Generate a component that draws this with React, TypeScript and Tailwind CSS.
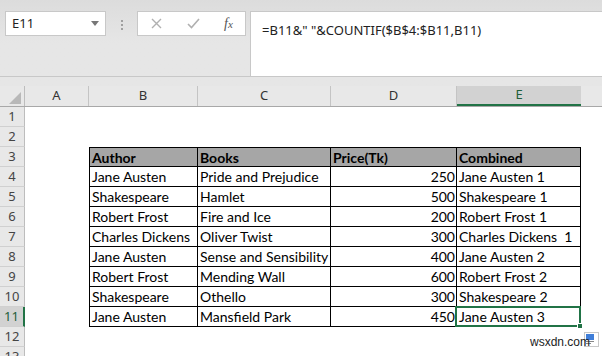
import React from "react"

const cols = [
  { key: "A", w: "w-[64px]" },
  { key: "B", w: "w-[109px]" },
  { key: "C", w: "w-[133px]" },
  { key: "D", w: "w-[126px]" },
  { key: "E", w: "w-[124px]" },
]

const data = [
  ["Jane Austen", "Pride and Prejudice", "250", "Jane Austen 1"],
  ["Shakespeare", "Hamlet", "500", "Shakespeare 1"],
  ["Robert Frost", "Fire and Ice", "200", "Robert Frost 1"],
  ["Charles Dickens", "Oliver Twist", "300", "Charles Dickens  1"],
  ["Jane Austen", "Sense and Sensibility", "400", "Jane Austen 2"],
  ["Robert Frost", "Mending Wall", "600", "Robert Frost 2"],
  ["Shakespeare", "Othello", "300", "Shakespeare 2"],
  ["Jane Austen", "Mansfield Park", "450", "Jane Austen 3"],
]

const cellFont = { fontFamily: "Lato, 'Liberation Sans', sans-serif" }

function RowHead({ n, active }: { n: number; active?: boolean }) {
  return (
    <div
      className={
        "w-[25px] shrink-0 h-full flex items-center justify-center text-[13px] border-b border-[#d0d0d0] " +
        (active
          ? "bg-[#d2d2d2] text-[#1e5e3a] border-r-2 border-r-[#217346]"
          : "bg-[#e8e8e8] text-[#444] border-r border-r-[#bdbdbd]")
      }
      style={{ fontFamily: "'Noto Sans', sans-serif" }}
    >
      {n}
    </div>
  )
}

function EmptyRow({ n }: { n: number }) {
  return (
    <div className="flex h-[20px]">
      <RowHead n={n} />
      <div className="flex-1 bg-white" />
    </div>
  )
}

export default function App() {
  return (
    <div className="w-[602px] h-[356px] overflow-hidden bg-white relative select-none">
      {/* formula area */}
      <div className="h-[86px] bg-gradient-to-b from-[#dcdcdc] via-[#e6e6e6] to-[#e6e6e6]">
        <div className="flex pt-[11px] h-[77px] border-b border-[#c8c8c8]">
          <div className="ml-[5px] w-[101px] h-[25px] bg-white border border-[#c8c8c8] flex items-center pl-[6px] pr-[6px]">
            <span className="text-[13px] text-[#222] flex-1" style={{ fontFamily: "'Noto Sans', sans-serif" }}>E11</span>
            <svg width="8" height="5" viewBox="0 0 8 5"><path d="M0 0h8L4 5z" fill="#777" /></svg>
          </div>
          <div className="w-[31px] flex flex-col items-center pt-[9px] gap-[2px]">
            <div className="w-[2px] h-[2px] bg-[#a0a0a0]" />
            <div className="w-[2px] h-[2px] bg-[#a0a0a0]" />
            <div className="w-[2px] h-[2px] bg-[#a0a0a0]" />
          </div>
          <div className="w-[109px] h-[25px] bg-white border border-[#c8c8c8] flex items-center">
            <svg className="ml-[13px]" width="11" height="11" viewBox="0 0 11 11">
              <path d="M1 1L10 10M10 1L1 10" stroke="#b0b0b0" strokeWidth="1.4" />
            </svg>
            <svg className="ml-[25px]" width="13" height="11" viewBox="0 0 13 11">
              <path d="M1 6L4.5 9.5L12 1" stroke="#b0b0b0" strokeWidth="1.6" fill="none" />
            </svg>
            <span
              className="ml-[24px] text-[14px] italic text-[#555] leading-none"
              style={{ fontFamily: "'Liberation Serif', serif" }}
            >
              f<span className="text-[11px]">x</span>
            </span>
          </div>
          <div className="ml-[4px] flex-1 h-[65px] bg-white border-l border-t border-[#c8c8c8] pl-[11px] pt-[5px]">
            <span className="text-[13px] text-[#222] whitespace-pre" style={{ fontFamily: "'Noto Sans', sans-serif" }}>
              =B11&amp;" "&amp;COUNTIF($B$4:$B11,B11)
            </span>
          </div>
        </div>
      </div>

      {/* column headers */}
      <div className="flex h-[21px] bg-[#e8e8e8] border-b border-[#a8a8a8]">
        <div className="w-[25px] shrink-0 border-r border-[#bdbdbd] flex items-end justify-end pr-[3px] pb-[2px]">
          <svg width="12" height="12" viewBox="0 0 12 12"><path d="M12 0V12H0z" fill="#b8b8b8" /></svg>
        </div>
        {cols.map((c) =>
          c.key === "E" ? (
            <div
              key={c.key}
              className={c.w + " shrink-0 bg-[#d2d2d2] border-b-2 border-[#217346] flex items-center justify-center text-[13px] text-[#1e5e3a]"}
              style={{ fontFamily: "'Noto Sans', sans-serif" }}
            >
              {c.key}
            </div>
          ) : (
            <div
              key={c.key}
              className={c.w + " shrink-0 border-r border-[#c4c4c4] flex items-center justify-center text-[13px] text-[#333]"}
              style={{ fontFamily: "'Noto Sans', sans-serif" }}
            >
              {c.key}
            </div>
          )
        )}
        <div className="flex-1" />
      </div>

      {/* rows */}
      <EmptyRow n={1} />
      <EmptyRow n={2} />

      <div className="flex h-[20px]">
        <RowHead n={3} />
        <div className="w-[64px] shrink-0" />
        {["Author", "Books", "Price(Tk)", "Combined"].map((h, i) => (
          <div
            key={h}
            className={
              cols[i + 1].w +
              " shrink-0 bg-[#a6a6a6] border-t border-r border-b border-black pl-[2px] flex items-center text-[14px] font-bold text-black " +
              (i === 0 ? "border-l" : "")
            }
            style={cellFont}
          >
            {h}
          </div>
        ))}
        <div className="flex-1" />
      </div>

      {data.map((r, ri) => {
        const n = ri + 4
        const last = n === 11
        return (
          <div key={n} className="flex h-[20px]">
            <RowHead n={n} active={last} />
            <div className="w-[64px] shrink-0" />
            {r.map((v, i) => (
              <div
                key={i}
                className={
                  cols[i + 1].w +
                  " shrink-0 relative border-r border-b border-black flex items-center whitespace-pre text-[14px] text-black " +
                  (i === 0 ? "border-l " : "") +
                  (i === 2 ? "justify-end pr-[1px] " : "pl-[2px] ") +
                  (i === 1 ? "overflow-visible z-10" : "")
                }
                style={cellFont}
              >
                {v}
                {last && i === 3 && (
                  <div className="absolute -left-[2px] -top-[1px] -right-[1px] -bottom-[1px] border-2 border-[#217346]">
                    <div className="absolute -right-[4px] -bottom-[4px] w-[6px] h-[6px] bg-[#217346] border border-white" />
                  </div>
                )}
              </div>
            ))}
            <div className="flex-1" />
          </div>
        )
      })}

      <EmptyRow n={12} />
      <EmptyRow n={13} />

      {/* paste options icon */}
      <div className="absolute left-[584px] top-[332px] w-[15px] h-[15px] bg-white border border-[#c8c8c8]">
        <div className="absolute left-[1px] top-[1px] w-[8px] h-[6px] bg-[#3f7ed8]" />
        <div className="absolute left-[1px] top-[8px] w-[8px] h-[1px] bg-[#888]" />
        <div className="absolute left-[1px] top-[10px] w-[5px] h-[1px] bg-[#888]" />
      </div>

      {/* watermark */}
      <div
        className="absolute left-[530px] top-[335px] text-[12px] leading-[14px] text-[#222]"
        style={{ fontFamily: "'Liberation Sans', sans-serif" }}
      >
        wsxdn.com
      </div>
    </div>
  )
}
